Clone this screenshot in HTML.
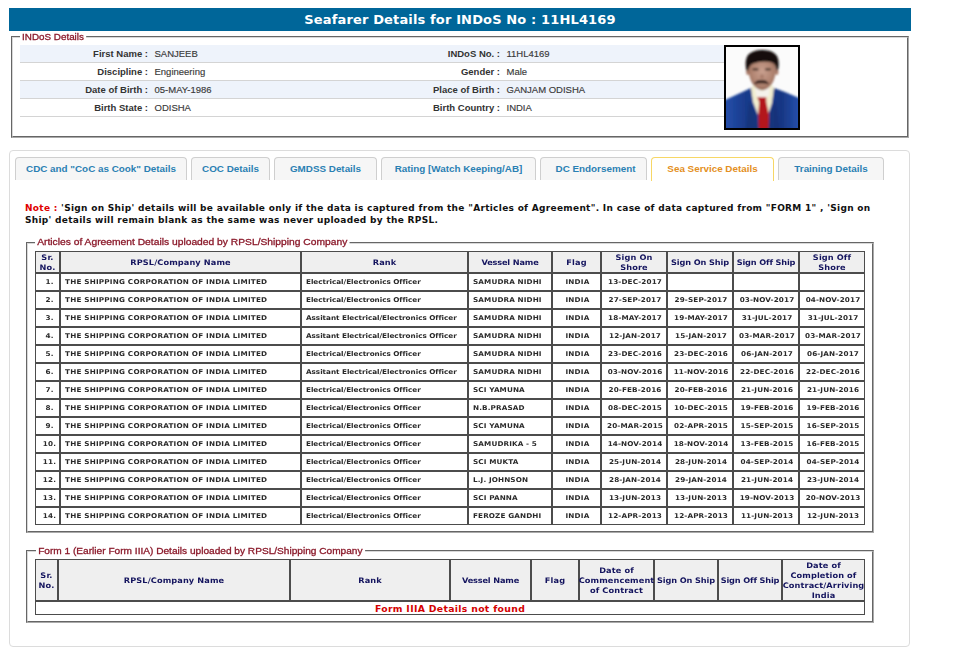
<!DOCTYPE html>
<html><head><meta charset="utf-8"><title>Seafarer Details</title>
<style>
*{box-sizing:border-box}
html,body{margin:0;padding:0;background:#fff}
body{width:956px;height:650px;position:relative;overflow:hidden;font-family:"Liberation Sans",Arial,sans-serif;font-size:9.5px;color:#333}
#hdr{position:absolute;z-index:5;left:9px;top:8px;width:902px;height:23px;background:#006699;color:#fff;font-family:"DejaVu Sans",Verdana,sans-serif;font-weight:bold;font-size:13px;letter-spacing:.14px;text-align:center;line-height:23px;white-space:nowrap}
.fs{position:absolute;border:1px solid;border-color:#666 #aaa #aaa #666}
.fs i{position:absolute;left:0;top:0;right:0;bottom:0;border:1px solid;border-color:#d8d8d8 #666 #666 #d8d8d8}
.lg{position:absolute;-webkit-text-stroke:.3px #8b1a2b;background:#fff;color:#8b1a2b;font-size:9.4px;transform-origin:0 50%;line-height:12px;height:12px;white-space:nowrap;padding:0 2px}
.band{position:absolute;left:20px;width:704px;height:17px;background:#eef3fb}
.ln{position:absolute;left:20px;width:704px;height:1px;background:#d4d4d4}
.lb{position:absolute;text-align:right;font-weight:bold;color:#333;white-space:nowrap;line-height:12px;width:140px}
.vl{position:absolute;color:#3a3a3a;-webkit-text-stroke:.15px #3a3a3a;white-space:nowrap;line-height:12px}
#photo{position:absolute;left:724px;top:45px;width:76px;height:85px;border:2px solid #000;background:#f4f6f5;overflow:hidden}
#tabs{position:absolute;left:9px;top:150px;width:901px;height:497px;border:1px solid #dcdcdc;border-radius:4px}
.tab{position:absolute;top:157px;height:23px;border:1px solid #cfcfcf;border-bottom:none;border-radius:4px 4px 0 0;background:#f6f6f6;color:#2a80b3;font-weight:bold;font-size:9.85px;line-height:21px;text-align:center;white-space:nowrap}
.tab.act{background:#fff;border-color:#f7d766;color:#e48f22;height:24px}
#note{position:absolute;left:25px;top:202px;width:880px;font-family:"DejaVu Sans",Verdana,sans-serif;font-weight:bold;font-size:9px;letter-spacing:.3px;line-height:12px;color:#111;white-space:nowrap}
#note i{font-style:normal;color:#e00000}
#t1 div,#t2 div{position:absolute}
.th{font-family:"DejaVu Sans",Verdana,sans-serif;font-weight:bold;font-size:7.6px;letter-spacing:.1px;transform:scaleX(1.08);color:#14145e;text-align:center;line-height:10px;display:flex;align-items:center;justify-content:center;white-space:nowrap}
.td{font-family:"DejaVu Sans",Verdana,sans-serif;font-weight:bold;font-size:6.6px;letter-spacing:.2px;transform:scaleX(1.1);transform-origin:0 50%;color:#2a2a2a;line-height:18px;height:18px;white-space:nowrap}
.td.c{text-align:center;transform-origin:50% 50%}
.nf{padding-top:1.5px;font-family:"DejaVu Sans",Verdana,sans-serif;font-weight:bold;font-size:9.3px;letter-spacing:.32px;color:#d40000;text-align:center;line-height:12px;white-space:nowrap}
</style></head><body>
<div id="hdr">Seafarer Details for INDoS No : 11HL4169</div>

<div class="fs" style="left:11px;top:36px;width:898px;height:102px"><i></i></div>
<div class="lg" style="left:20px;top:30.5px;transform:scaleX(1.05)">INDoS Details</div>
<div class="band" style="top:45px"></div><div class="ln" style="top:62px"></div>
<div class="ln" style="top:80px"></div>
<div class="band" style="top:81px"></div><div class="ln" style="top:98px"></div>
<div class="ln" style="top:116px"></div>

<div class="lb" style="left:8px;top:48px">First Name :</div><div class="vl" style="left:154.5px;top:48px">SANJEEB</div>
<div class="lb" style="left:8px;top:66px">Discipline :</div><div class="vl" style="left:154.5px;top:66px">Engineering</div>
<div class="lb" style="left:8px;top:84px">Date of Birth :</div><div class="vl" style="left:154.5px;top:84px">05-MAY-1986</div>
<div class="lb" style="left:8px;top:102px">Birth State :</div><div class="vl" style="left:154.5px;top:102px">ODISHA</div>
<div class="lb" style="left:360px;top:48px">INDoS No. :</div><div class="vl" style="left:506.5px;top:48px">11HL4169</div>
<div class="lb" style="left:360px;top:66px">Gender :</div><div class="vl" style="left:506.5px;top:66px">Male</div>
<div class="lb" style="left:360px;top:84px">Place of Birth :</div><div class="vl" style="left:506.5px;top:84px">GANJAM ODISHA</div>
<div class="lb" style="left:360px;top:102px">Birth Country :</div><div class="vl" style="left:506.5px;top:102px">INDIA</div>

<div id="photo">
<svg width="72" height="81" viewBox="0 0 72 81">
<defs><filter id="bl" x="-20%" y="-20%" width="140%" height="140%"><feGaussianBlur stdDeviation="0.8"/></filter>
<linearGradient id="sg" x1="0" y1="0" x2="1" y2="0"><stop offset="0" stop-color="#2450ad"/><stop offset=".3" stop-color="#193a8a"/><stop offset=".5" stop-color="#1b3f93"/><stop offset=".75" stop-color="#183683"/><stop offset="1" stop-color="#2552b0"/></linearGradient>
<radialGradient id="fg" cx=".5" cy=".45" r=".6"><stop offset="0" stop-color="#c9a08f"/><stop offset=".65" stop-color="#b08370"/><stop offset="1" stop-color="#8e6352"/></radialGradient>
</defs>
<rect width="72" height="81" fill="#fbfbfb"/>
<g filter="url(#bl)">
<path d="M-3 84 L-3 54 L0 52.5 Q12 47 25 41 L30 38 L43 38 L48 41 Q60 45 72 50.5 L75 52 L75 84 Z" fill="url(#sg)"/>
<path d="M25 41.5 L29 36 L44 36 L48 41 L46 56 L42 68 L37 60 L32 68 L27 55 Z" fill="#f1edcf"/>
<path d="M29 40 L36 44 L44 40 L43 49 L36 52 L30 49 Z" fill="#f4f1ea"/>
<path d="M31.2 50.3 L40.2 50.3 L40.3 55 L43 68 L42.6 84 L32.6 84 L32.2 68 L33.2 55 Z" fill="#b3131f"/>
<path d="M23 54 L30 66 L33 84 L20 84 Z" fill="#15306f" opacity=".55"/>
<path d="M50 53 L44 66 L42 84 L54 84 Z" fill="#15306f" opacity=".55"/>
<path d="M22.6 22 Q22.5 10 36.2 10 Q50 10 49.8 22 Q49.8 31 45.5 37.5 Q41 43.2 36.2 43.2 Q31.5 43.2 27 37.5 Q22.6 31 22.6 22 Z" fill="url(#fg)"/>
<ellipse cx="21.8" cy="25" rx="1.6" ry="3" fill="#a87866"/><ellipse cx="50.8" cy="25" rx="1.6" ry="3" fill="#a87866"/>
<path d="M20.5 24 Q18 12 23 7 Q29 2.5 37 3 Q47 3 51 9 Q54 15 51.8 24 L50 22 Q50 17 46 15.5 Q37 13 27 16.5 Q23 18 22.5 23 Z" fill="#15110f"/>
<path d="M28.4 36.6 Q30 33.2 35.5 33.6 Q41 33.2 42.6 36.6 Q39 35.6 35.5 35.8 Q32 35.6 28.4 36.6 Z" fill="#2a1712" stroke="#2a1712" stroke-width="1"/>
<rect x="26.5" y="21.6" width="6" height="1.7" rx=".8" fill="#2d1c16"/><rect x="39" y="21.6" width="6" height="1.7" rx=".8" fill="#2d1c16"/>
<ellipse cx="36" cy="29.5" rx="1.8" ry="2.6" fill="#9a6a58" opacity=".6"/>
</g>
</svg>
</div>

<div id="tabs"></div>
<div class="tab" style="left:15px;width:172px">CDC and "CoC as Cook" Details</div>
<div class="tab" style="left:191px;width:79px">COC Details</div>
<div class="tab" style="left:274px;width:103px">GMDSS Details</div>
<div class="tab" style="left:381px;width:155px">Rating [Watch Keeping/AB]</div>
<div class="tab" style="left:540px;width:107px;padding-left:4px">DC Endorsement</div>
<div class="tab act" style="left:651px;width:123px">Sea Service Details</div>
<div class="tab" style="left:778px;width:106px">Training Details</div>

<div id="note"><i>Note :</i> 'Sign on Ship' details will be available only if the data is captured from the "Articles of Agreement". In case of data captured from "FORM 1" , 'Sign on<br>Ship' details will remain blank as the same was never uploaded by the RPSL.</div>

<div class="fs" style="left:26px;top:242px;width:848px;height:291px"><i></i></div>
<div class="lg" style="left:35px;top:236.4px;transform:scaleX(1.096)">Articles of Agreement Details uploaded by RPSL/Shipping Company</div>
<div class="fs" style="left:26px;top:550px;width:848px;height:73px"><i></i></div>
<div class="lg" style="left:35.5px;top:544.5px;transform:scaleX(1.079)">Form 1 (Earlier Form IIIA) Details uploaded by RPSL/Shipping Company</div>

<div id="t1">
<div style="position:absolute;left:35px;top:251px;width:830px;height:22px;background:#efefef"></div>
<div style="position:absolute;left:35px;top:251px;width:830px;height:1px;background:#4c4c4c"></div>
<div style="position:absolute;left:35px;top:272px;width:830px;height:2px;background:#4c4c4c"></div>
<div style="position:absolute;left:35px;top:290px;width:830px;height:2px;background:#4c4c4c"></div>
<div style="position:absolute;left:35px;top:308px;width:830px;height:2px;background:#4c4c4c"></div>
<div style="position:absolute;left:35px;top:326px;width:830px;height:2px;background:#4c4c4c"></div>
<div style="position:absolute;left:35px;top:344px;width:830px;height:2px;background:#4c4c4c"></div>
<div style="position:absolute;left:35px;top:362px;width:830px;height:2px;background:#4c4c4c"></div>
<div style="position:absolute;left:35px;top:380px;width:830px;height:2px;background:#4c4c4c"></div>
<div style="position:absolute;left:35px;top:398px;width:830px;height:2px;background:#4c4c4c"></div>
<div style="position:absolute;left:35px;top:416px;width:830px;height:2px;background:#4c4c4c"></div>
<div style="position:absolute;left:35px;top:434px;width:830px;height:2px;background:#4c4c4c"></div>
<div style="position:absolute;left:35px;top:452px;width:830px;height:2px;background:#4c4c4c"></div>
<div style="position:absolute;left:35px;top:470px;width:830px;height:2px;background:#4c4c4c"></div>
<div style="position:absolute;left:35px;top:488px;width:830px;height:2px;background:#4c4c4c"></div>
<div style="position:absolute;left:35px;top:506px;width:830px;height:2px;background:#4c4c4c"></div>
<div style="position:absolute;left:35px;top:524px;width:830px;height:1px;background:#4c4c4c"></div>
<div style="position:absolute;left:35px;top:251px;width:1px;height:274px;background:#4c4c4c"></div>
<div style="position:absolute;left:59px;top:251px;width:2px;height:274px;background:#4c4c4c"></div>
<div style="position:absolute;left:300px;top:251px;width:2px;height:274px;background:#4c4c4c"></div>
<div style="position:absolute;left:467px;top:251px;width:2px;height:274px;background:#4c4c4c"></div>
<div style="position:absolute;left:551px;top:251px;width:2px;height:274px;background:#4c4c4c"></div>
<div style="position:absolute;left:600px;top:251px;width:2px;height:274px;background:#4c4c4c"></div>
<div style="position:absolute;left:666px;top:251px;width:2px;height:274px;background:#4c4c4c"></div>
<div style="position:absolute;left:732px;top:251px;width:2px;height:274px;background:#4c4c4c"></div>
<div style="position:absolute;left:798px;top:251px;width:2px;height:274px;background:#4c4c4c"></div>
<div style="position:absolute;left:864px;top:251px;width:1px;height:274px;background:#4c4c4c"></div>
<div class="th two" style="left:35px;top:252px;width:25px;height:22px">Sr.<br>No.</div>
<div class="th" style="left:60px;top:252px;width:241px;height:22px">RPSL/Company Name</div>
<div class="th" style="left:301px;top:252px;width:167px;height:22px">Rank</div>
<div class="th" style="left:468px;top:252px;width:84px;height:22px;letter-spacing:-.15px">Vessel Name</div>
<div class="th" style="left:552px;top:252px;width:49px;height:22px">Flag</div>
<div class="th two" style="left:601px;top:252px;width:66px;height:22px">Sign On<br>Shore</div>
<div class="th" style="left:667px;top:252px;width:66px;height:22px;letter-spacing:-.1px">Sign On Ship</div>
<div class="th" style="left:733px;top:252px;width:66px;height:22px;letter-spacing:-.15px">Sign Off Ship</div>
<div class="th two" style="left:799px;top:252px;width:66px;height:22px">Sign Off<br>Shore</div>
<div class="td c" style="left:41px;top:273px;width:17px">1.</div>
<div class="td" style="left:65px;top:273px;width:235px;letter-spacing:.175px">THE SHIPPING CORPORATION OF INDIA LIMITED</div>
<div class="td" style="left:306px;top:273px;width:161px;letter-spacing:-.03px">Electrical/Electronics Officer</div>
<div class="td" style="left:473px;top:273px;width:78px;letter-spacing:.1px">SAMUDRA NIDHI</div>
<div class="td c" style="left:557px;top:273px;width:41px">INDIA</div>
<div class="td c" style="left:606px;top:273px;width:58px;letter-spacing:.1px">13-DEC-2017</div>
<div class="td c" style="left:41px;top:291px;width:17px">2.</div>
<div class="td" style="left:65px;top:291px;width:235px;letter-spacing:.175px">THE SHIPPING CORPORATION OF INDIA LIMITED</div>
<div class="td" style="left:306px;top:291px;width:161px;letter-spacing:-.03px">Electrical/Electronics Officer</div>
<div class="td" style="left:473px;top:291px;width:78px;letter-spacing:.1px">SAMUDRA NIDHI</div>
<div class="td c" style="left:557px;top:291px;width:41px">INDIA</div>
<div class="td c" style="left:606px;top:291px;width:58px;letter-spacing:.1px">27-SEP-2017</div>
<div class="td c" style="left:672px;top:291px;width:58px;letter-spacing:.1px">29-SEP-2017</div>
<div class="td c" style="left:738px;top:291px;width:58px;letter-spacing:.1px">03-NOV-2017</div>
<div class="td c" style="left:804px;top:291px;width:58px;letter-spacing:.1px">04-NOV-2017</div>
<div class="td c" style="left:41px;top:309px;width:17px">3.</div>
<div class="td" style="left:65px;top:309px;width:235px;letter-spacing:.175px">THE SHIPPING CORPORATION OF INDIA LIMITED</div>
<div class="td" style="left:306px;top:309px;width:161px;letter-spacing:-.03px">Assitant Electrical/Electronics Officer</div>
<div class="td" style="left:473px;top:309px;width:78px;letter-spacing:.1px">SAMUDRA NIDHI</div>
<div class="td c" style="left:557px;top:309px;width:41px">INDIA</div>
<div class="td c" style="left:606px;top:309px;width:58px;letter-spacing:.1px">18-MAY-2017</div>
<div class="td c" style="left:672px;top:309px;width:58px;letter-spacing:.1px">19-MAY-2017</div>
<div class="td c" style="left:738px;top:309px;width:58px;letter-spacing:.1px">31-JUL-2017</div>
<div class="td c" style="left:804px;top:309px;width:58px;letter-spacing:.1px">31-JUL-2017</div>
<div class="td c" style="left:41px;top:327px;width:17px">4.</div>
<div class="td" style="left:65px;top:327px;width:235px;letter-spacing:.175px">THE SHIPPING CORPORATION OF INDIA LIMITED</div>
<div class="td" style="left:306px;top:327px;width:161px;letter-spacing:-.03px">Assitant Electrical/Electronics Officer</div>
<div class="td" style="left:473px;top:327px;width:78px;letter-spacing:.1px">SAMUDRA NIDHI</div>
<div class="td c" style="left:557px;top:327px;width:41px">INDIA</div>
<div class="td c" style="left:606px;top:327px;width:58px;letter-spacing:.1px">12-JAN-2017</div>
<div class="td c" style="left:672px;top:327px;width:58px;letter-spacing:.1px">15-JAN-2017</div>
<div class="td c" style="left:738px;top:327px;width:58px;letter-spacing:.1px">03-MAR-2017</div>
<div class="td c" style="left:804px;top:327px;width:58px;letter-spacing:.1px">03-MAR-2017</div>
<div class="td c" style="left:41px;top:345px;width:17px">5.</div>
<div class="td" style="left:65px;top:345px;width:235px;letter-spacing:.175px">THE SHIPPING CORPORATION OF INDIA LIMITED</div>
<div class="td" style="left:306px;top:345px;width:161px;letter-spacing:-.03px">Electrical/Electronics Officer</div>
<div class="td" style="left:473px;top:345px;width:78px;letter-spacing:.1px">SAMUDRA NIDHI</div>
<div class="td c" style="left:557px;top:345px;width:41px">INDIA</div>
<div class="td c" style="left:606px;top:345px;width:58px;letter-spacing:.1px">23-DEC-2016</div>
<div class="td c" style="left:672px;top:345px;width:58px;letter-spacing:.1px">23-DEC-2016</div>
<div class="td c" style="left:738px;top:345px;width:58px;letter-spacing:.1px">06-JAN-2017</div>
<div class="td c" style="left:804px;top:345px;width:58px;letter-spacing:.1px">06-JAN-2017</div>
<div class="td c" style="left:41px;top:363px;width:17px">6.</div>
<div class="td" style="left:65px;top:363px;width:235px;letter-spacing:.175px">THE SHIPPING CORPORATION OF INDIA LIMITED</div>
<div class="td" style="left:306px;top:363px;width:161px;letter-spacing:-.03px">Assitant Electrical/Electronics Officer</div>
<div class="td" style="left:473px;top:363px;width:78px;letter-spacing:.1px">SAMUDRA NIDHI</div>
<div class="td c" style="left:557px;top:363px;width:41px">INDIA</div>
<div class="td c" style="left:606px;top:363px;width:58px;letter-spacing:.1px">03-NOV-2016</div>
<div class="td c" style="left:672px;top:363px;width:58px;letter-spacing:.1px">11-NOV-2016</div>
<div class="td c" style="left:738px;top:363px;width:58px;letter-spacing:.1px">22-DEC-2016</div>
<div class="td c" style="left:804px;top:363px;width:58px;letter-spacing:.1px">22-DEC-2016</div>
<div class="td c" style="left:41px;top:381px;width:17px">7.</div>
<div class="td" style="left:65px;top:381px;width:235px;letter-spacing:.175px">THE SHIPPING CORPORATION OF INDIA LIMITED</div>
<div class="td" style="left:306px;top:381px;width:161px;letter-spacing:-.03px">Electrical/Electronics Officer</div>
<div class="td" style="left:473px;top:381px;width:78px;letter-spacing:.1px">SCI YAMUNA</div>
<div class="td c" style="left:557px;top:381px;width:41px">INDIA</div>
<div class="td c" style="left:606px;top:381px;width:58px;letter-spacing:.1px">20-FEB-2016</div>
<div class="td c" style="left:672px;top:381px;width:58px;letter-spacing:.1px">20-FEB-2016</div>
<div class="td c" style="left:738px;top:381px;width:58px;letter-spacing:.1px">21-JUN-2016</div>
<div class="td c" style="left:804px;top:381px;width:58px;letter-spacing:.1px">21-JUN-2016</div>
<div class="td c" style="left:41px;top:399px;width:17px">8.</div>
<div class="td" style="left:65px;top:399px;width:235px;letter-spacing:.175px">THE SHIPPING CORPORATION OF INDIA LIMITED</div>
<div class="td" style="left:306px;top:399px;width:161px;letter-spacing:-.03px">Electrical/Electronics Officer</div>
<div class="td" style="left:473px;top:399px;width:78px;letter-spacing:.1px">N.B.PRASAD</div>
<div class="td c" style="left:557px;top:399px;width:41px">INDIA</div>
<div class="td c" style="left:606px;top:399px;width:58px;letter-spacing:.1px">08-DEC-2015</div>
<div class="td c" style="left:672px;top:399px;width:58px;letter-spacing:.1px">10-DEC-2015</div>
<div class="td c" style="left:738px;top:399px;width:58px;letter-spacing:.1px">19-FEB-2016</div>
<div class="td c" style="left:804px;top:399px;width:58px;letter-spacing:.1px">19-FEB-2016</div>
<div class="td c" style="left:41px;top:417px;width:17px">9.</div>
<div class="td" style="left:65px;top:417px;width:235px;letter-spacing:.175px">THE SHIPPING CORPORATION OF INDIA LIMITED</div>
<div class="td" style="left:306px;top:417px;width:161px;letter-spacing:-.03px">Electrical/Electronics Officer</div>
<div class="td" style="left:473px;top:417px;width:78px;letter-spacing:.1px">SCI YAMUNA</div>
<div class="td c" style="left:557px;top:417px;width:41px">INDIA</div>
<div class="td c" style="left:606px;top:417px;width:58px;letter-spacing:.1px">20-MAR-2015</div>
<div class="td c" style="left:672px;top:417px;width:58px;letter-spacing:.1px">02-APR-2015</div>
<div class="td c" style="left:738px;top:417px;width:58px;letter-spacing:.1px">15-SEP-2015</div>
<div class="td c" style="left:804px;top:417px;width:58px;letter-spacing:.1px">16-SEP-2015</div>
<div class="td c" style="left:41px;top:435px;width:17px">10.</div>
<div class="td" style="left:65px;top:435px;width:235px;letter-spacing:.175px">THE SHIPPING CORPORATION OF INDIA LIMITED</div>
<div class="td" style="left:306px;top:435px;width:161px;letter-spacing:-.03px">Electrical/Electronics Officer</div>
<div class="td" style="left:473px;top:435px;width:78px;letter-spacing:.1px">SAMUDRIKA - 5</div>
<div class="td c" style="left:557px;top:435px;width:41px">INDIA</div>
<div class="td c" style="left:606px;top:435px;width:58px;letter-spacing:.1px">14-NOV-2014</div>
<div class="td c" style="left:672px;top:435px;width:58px;letter-spacing:.1px">18-NOV-2014</div>
<div class="td c" style="left:738px;top:435px;width:58px;letter-spacing:.1px">13-FEB-2015</div>
<div class="td c" style="left:804px;top:435px;width:58px;letter-spacing:.1px">16-FEB-2015</div>
<div class="td c" style="left:41px;top:453px;width:17px">11.</div>
<div class="td" style="left:65px;top:453px;width:235px;letter-spacing:.175px">THE SHIPPING CORPORATION OF INDIA LIMITED</div>
<div class="td" style="left:306px;top:453px;width:161px;letter-spacing:-.03px">Electrical/Electronics Officer</div>
<div class="td" style="left:473px;top:453px;width:78px;letter-spacing:.1px">SCI MUKTA</div>
<div class="td c" style="left:557px;top:453px;width:41px">INDIA</div>
<div class="td c" style="left:606px;top:453px;width:58px;letter-spacing:.1px">25-JUN-2014</div>
<div class="td c" style="left:672px;top:453px;width:58px;letter-spacing:.1px">28-JUN-2014</div>
<div class="td c" style="left:738px;top:453px;width:58px;letter-spacing:.1px">04-SEP-2014</div>
<div class="td c" style="left:804px;top:453px;width:58px;letter-spacing:.1px">04-SEP-2014</div>
<div class="td c" style="left:41px;top:471px;width:17px">12.</div>
<div class="td" style="left:65px;top:471px;width:235px;letter-spacing:.175px">THE SHIPPING CORPORATION OF INDIA LIMITED</div>
<div class="td" style="left:306px;top:471px;width:161px;letter-spacing:-.03px">Electrical/Electronics Officer</div>
<div class="td" style="left:473px;top:471px;width:78px;letter-spacing:.1px">L.J. JOHNSON</div>
<div class="td c" style="left:557px;top:471px;width:41px">INDIA</div>
<div class="td c" style="left:606px;top:471px;width:58px;letter-spacing:.1px">28-JAN-2014</div>
<div class="td c" style="left:672px;top:471px;width:58px;letter-spacing:.1px">29-JAN-2014</div>
<div class="td c" style="left:738px;top:471px;width:58px;letter-spacing:.1px">21-JUN-2014</div>
<div class="td c" style="left:804px;top:471px;width:58px;letter-spacing:.1px">23-JUN-2014</div>
<div class="td c" style="left:41px;top:489px;width:17px">13.</div>
<div class="td" style="left:65px;top:489px;width:235px;letter-spacing:.175px">THE SHIPPING CORPORATION OF INDIA LIMITED</div>
<div class="td" style="left:306px;top:489px;width:161px;letter-spacing:-.03px">Electrical/Electronics Officer</div>
<div class="td" style="left:473px;top:489px;width:78px;letter-spacing:.1px">SCI PANNA</div>
<div class="td c" style="left:557px;top:489px;width:41px">INDIA</div>
<div class="td c" style="left:606px;top:489px;width:58px;letter-spacing:.1px">13-JUN-2013</div>
<div class="td c" style="left:672px;top:489px;width:58px;letter-spacing:.1px">13-JUN-2013</div>
<div class="td c" style="left:738px;top:489px;width:58px;letter-spacing:.1px">19-NOV-2013</div>
<div class="td c" style="left:804px;top:489px;width:58px;letter-spacing:.1px">20-NOV-2013</div>
<div class="td c" style="left:41px;top:507px;width:17px">14.</div>
<div class="td" style="left:65px;top:507px;width:235px;letter-spacing:.175px">THE SHIPPING CORPORATION OF INDIA LIMITED</div>
<div class="td" style="left:306px;top:507px;width:161px;letter-spacing:-.03px">Electrical/Electronics Officer</div>
<div class="td" style="left:473px;top:507px;width:78px;letter-spacing:.1px">FEROZE GANDHI</div>
<div class="td c" style="left:557px;top:507px;width:41px">INDIA</div>
<div class="td c" style="left:606px;top:507px;width:58px;letter-spacing:.1px">12-APR-2013</div>
<div class="td c" style="left:672px;top:507px;width:58px;letter-spacing:.1px">12-APR-2013</div>
<div class="td c" style="left:738px;top:507px;width:58px;letter-spacing:.1px">11-JUN-2013</div>
<div class="td c" style="left:804px;top:507px;width:58px;letter-spacing:.1px">12-JUN-2013</div>
</div>
<div id="t2">
<div style="position:absolute;left:35px;top:559px;width:830px;height:42px;background:#efefef"></div>
<div style="position:absolute;left:35px;top:559px;width:830px;height:1px;background:#4c4c4c"></div>
<div style="position:absolute;left:35px;top:600px;width:830px;height:2px;background:#4c4c4c"></div>
<div style="position:absolute;left:35px;top:614px;width:830px;height:1px;background:#4c4c4c"></div>
<div style="position:absolute;left:35px;top:559px;width:1px;height:56px;background:#4c4c4c"></div>
<div style="position:absolute;left:57px;top:559px;width:2px;height:42px;background:#4c4c4c"></div>
<div style="position:absolute;left:289px;top:559px;width:2px;height:42px;background:#4c4c4c"></div>
<div style="position:absolute;left:449px;top:559px;width:2px;height:42px;background:#4c4c4c"></div>
<div style="position:absolute;left:530px;top:559px;width:2px;height:42px;background:#4c4c4c"></div>
<div style="position:absolute;left:578px;top:559px;width:2px;height:42px;background:#4c4c4c"></div>
<div style="position:absolute;left:653px;top:559px;width:2px;height:42px;background:#4c4c4c"></div>
<div style="position:absolute;left:717px;top:559px;width:2px;height:42px;background:#4c4c4c"></div>
<div style="position:absolute;left:781px;top:559px;width:2px;height:42px;background:#4c4c4c"></div>
<div style="position:absolute;left:864px;top:559px;width:1px;height:56px;background:#4c4c4c"></div>
<div class="th" style="left:35px;top:560px;width:23px;height:42px">Sr.<br>No.</div>
<div class="th" style="left:58px;top:560px;width:232px;height:42px">RPSL/Company Name</div>
<div class="th" style="left:290px;top:560px;width:160px;height:42px">Rank</div>
<div class="th" style="left:450px;top:560px;width:81px;height:42px;letter-spacing:-.15px">Vessel Name</div>
<div class="th" style="left:531px;top:560px;width:48px;height:42px">Flag</div>
<div class="th" style="left:579px;top:560px;width:75px;height:42px">Date of<br>Commencement<br>of Contract</div>
<div class="th" style="left:654px;top:560px;width:64px;height:42px;letter-spacing:-.1px">Sign On Ship</div>
<div class="th" style="left:718px;top:560px;width:64px;height:42px;letter-spacing:-.15px">Sign Off Ship</div>
<div class="th" style="left:782px;top:560px;width:83px;height:42px">Date of<br>Completion of<br>Contract/Arriving<br>India</div>
<div class="nf" style="left:35px;top:601px;width:830px;height:14px">Form IIIA Details not found</div>
</div>
</body></html>
